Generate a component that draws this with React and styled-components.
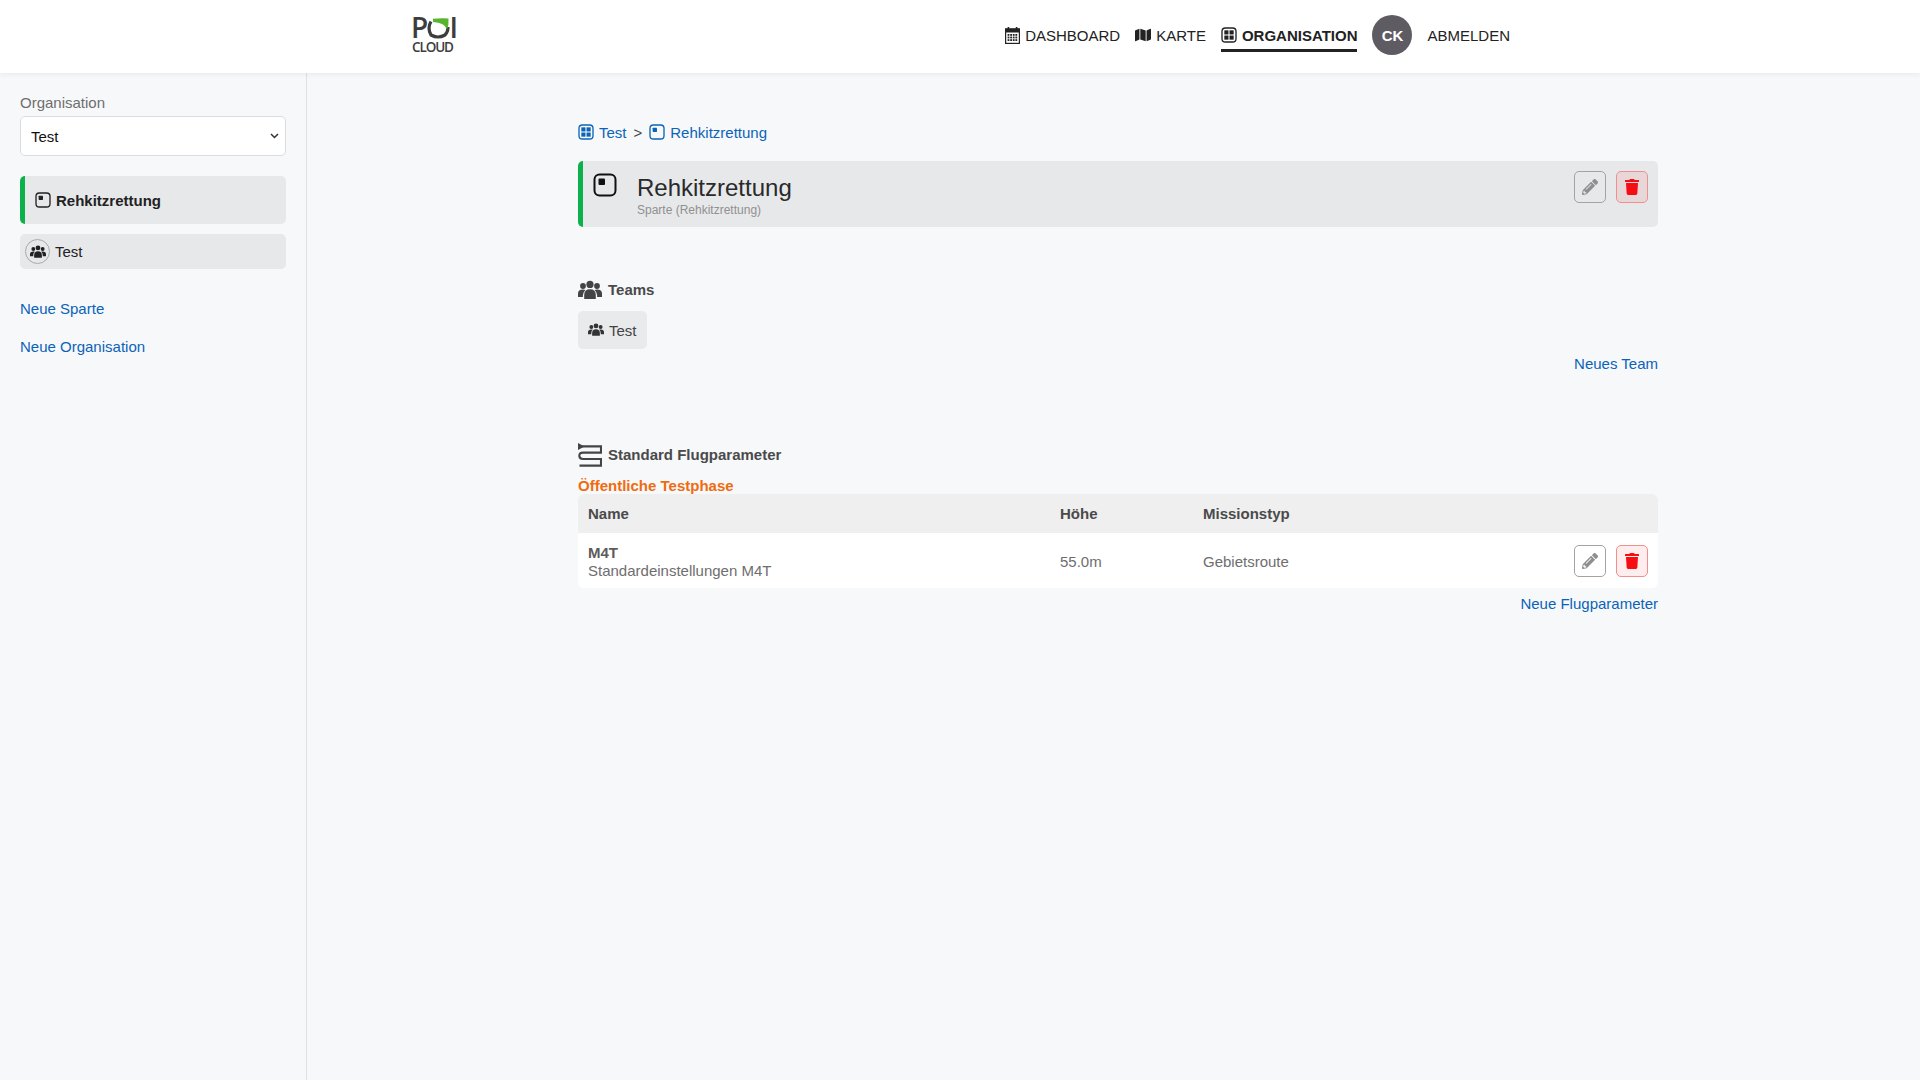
import React from 'react';
import styled, { createGlobalStyle } from 'styled-components';
import { FaMap, FaPencilAlt, FaTrash } from 'react-icons/fa';

const GlobalStyle = createGlobalStyle`
  html, body {
    margin: 0;
    padding: 0;
    background: #f7f8fa;
    color: #222;
    font-family: "Liberation Sans", Arial, sans-serif;
    font-size: 15px;
  }
  * { box-sizing: border-box; }
`;

const Page = styled.div`
  display: flex;
  flex-direction: column;
  min-height: 100vh;
`;

const Header = styled.header`
  display: flex;
  align-items: center;
  justify-content: space-between;
  height: 73px;
  width: 1510px;
  padding: 0 0 3px 412px;
  flex: none;
`;

const HeaderBar = styled.div`
  background: #fff;
  box-shadow: 0 1px 6px rgba(0, 0, 0, 0.07);
  position: relative;
`;

const Nav = styled.nav`
  display: flex;
  align-items: center;
  gap: 15px;
`;

const NavItem = styled.a`
  display: flex;
  align-items: center;
  gap: 5px;
  height: ${({ $active }) => ($active ? '31px' : '34px')};
  margin-top: ${({ $active }) => ($active ? '3px' : '0')};
  border-bottom: ${({ $active }) => ($active ? '3px solid #222' : '0')};
  color: #222;
  font-weight: ${({ $active }) => ($active ? 700 : 400)};
  font-size: 15px;
`;

const Avatar = styled.div`
  display: flex;
  align-items: center;
  justify-content: center;
  width: 40px;
  height: 40px;
  border-radius: 50%;
  background: #5f5b63;
  color: #fff;
  font-weight: 700;
  font-size: 15px;
`;

const Body = styled.div`
  display: flex;
  flex: 1;
`;

const Sidebar = styled.aside`
  width: 307px;
  flex: none;
  padding: 21px 20px 0;
  border-right: 1px solid #dfe1e3;
`;

const FieldLabel = styled.label`
  display: block;
  height: 17px;
  line-height: 17px;
  color: #6e6e6e;
`;

const chevron =
  "data:image/svg+xml,%3Csvg xmlns='http://www.w3.org/2000/svg' width='9' height='6' viewBox='0 0 9 6'%3E%3Cpath d='M1 1l3.5 3.5L8 1' fill='none' stroke='%23333' stroke-width='1.5'/%3E%3C/svg%3E";

const OrgSelect = styled.select`
  display: block;
  width: 266px;
  height: 40px;
  margin-top: 5px;
  padding: 0 20px 0 10px;
  border: 1px solid #dcdcdc;
  border-radius: 5px;
  appearance: none;
  background: #fff url("${chevron}") no-repeat right 6px center;
  color: #111;
  font-family: inherit;
  font-size: 15px;
`;

const SectionItem = styled.div`
  display: flex;
  align-items: center;
  gap: 5px;
  width: 266px;
  height: 48px;
  margin-top: 20px;
  padding-left: 10px;
  border-left: 5px solid #0db14b;
  border-radius: 5px;
  background: #e7e8ea;
  font-weight: 700;
`;

const TeamItem = styled.div`
  display: flex;
  align-items: center;
  gap: 5px;
  width: 266px;
  height: 35px;
  margin-top: 10px;
  padding-left: 5px;
  border-radius: 5px;
  background: #e7e8ea;
`;

const RoundIcon = styled.span`
  display: flex;
  align-items: center;
  justify-content: center;
  width: 25px;
  height: 25px;
  border: 1px solid #aaa;
  border-radius: 50%;
`;

const SideLink = styled.a`
  display: block;
  height: 18px;
  line-height: 18px;
  margin-top: ${({ $top }) => $top}px;
  color: #0b63b8;
`;

const Main = styled.main`
  flex: 1;
  padding: 49px 0 0 271px;
`;

const Content = styled.div`
  width: 1080px;
`;

const Breadcrumb = styled.div`
  display: flex;
  align-items: center;
  height: 20px;
  color: #0b63b8;
`;

const CrumbLink = styled.a`
  display: flex;
  align-items: center;
  gap: 5px;
`;

const CrumbSep = styled.span`
  margin: 0 7px;
  color: #444;
`;

const TitleCard = styled.div`
  display: flex;
  align-items: flex-start;
  height: 66px;
  margin-top: 19px;
  padding: 12px 10px 0;
  border-left: 5px solid #0db14b;
  border-radius: 5px;
  background: #e7e8ea;
`;

const TitleText = styled.div`
  flex: 1;
  margin-left: 20px;
`;

const Title = styled.h1`
  margin: 1px 0 0;
  font-size: 24px;
  font-weight: 400;
  line-height: 28px;
  color: #2a2a2a;
`;

const Subtitle = styled.div`
  margin-top: 1px;
  font-size: 12px;
  line-height: 14px;
  color: #909090;
`;

const Actions = styled.div`
  display: flex;
  justify-content: flex-end;
  gap: 10px;
  margin-top: ${({ $offset }) => $offset || 0}px;
`;

const EditButton = styled.button`
  display: flex;
  align-items: center;
  justify-content: center;
  width: 32px;
  height: 32px;
  padding: 0;
  border: 1px solid #a3a3a3;
  border-radius: 5px;
  background: transparent;
  color: #8f8f8f;
  font-size: 16px;
`;

const DeleteButton = styled(EditButton)`
  border-color: #ef8f8f;
  background: rgba(255, 0, 0, 0.07);
  color: #f60d13;
`;

const SectionHeading = styled.h2`
  display: flex;
  align-items: center;
  gap: 6px;
  height: 24px;
  margin: ${({ $top }) => $top}px 0 0;
  font-size: 15px;
  font-weight: 700;
  color: #4a4a4a;
`;

const HeadingText = styled.span`
  margin-top: -2px;
`;

const TeamChip = styled.div`
  display: inline-flex;
  align-items: center;
  gap: 5px;
  height: 38px;
  margin-top: 9px;
  padding: 0 10px;
  border-radius: 5px;
  background: #e9eaec;
  color: #444;
`;

const RightLink = styled.a`
  display: block;
  height: 18px;
  line-height: 18px;
  margin-top: ${({ $top }) => $top}px;
  text-align: right;
  color: #0b63b8;
`;

const Notice = styled.div`
  height: 17px;
  margin-top: 10px;
  line-height: 17px;
  font-weight: 700;
  color: #ee6c0f;
`;

const ParamTable = styled.table`
  width: 100%;
  border-collapse: separate;
  border-spacing: 0;
  table-layout: fixed;
  border-radius: 6px;
  overflow: hidden;
  background: #fff;
`;

const HeadCell = styled.th`
  height: 39px;
  width: ${({ $width }) => ($width ? `${$width}px` : 'auto')};
  padding: 0 10px;
  background: #efefef;
  text-align: left;
  font-weight: 700;
  color: #4a4a4a;
`;

const Cell = styled.td`
  height: 55px;
  padding: 2px 10px 0;
  color: #6e6e6e;
`;

const ActionCell = styled(Cell)`
  padding-top: 0;
`;

const RowName = styled.div`
  font-weight: 700;
  line-height: 18px;
  color: #5c5c5c;
`;

const RowInfo = styled.div`
  line-height: 18px;
`;

const LayoutIcon = ({ size, stroke, panes }) => (
  <svg width={size} height={size} viewBox="0 0 24 24" fill="none" style={{ flex: 'none' }}>
    <rect x="1.5" y="1.5" width="21" height="21" rx="5" stroke={stroke} strokeWidth="2" />
    {panes ? (
      <>
        <rect x="5" y="5" width="6.2" height="6.2" fill={stroke} />
        <rect x="12.8" y="5" width="6.2" height="6.2" fill={stroke} />
        <rect x="5" y="12.8" width="6.2" height="6.2" fill={stroke} />
        <rect x="12.8" y="12.8" width="6.2" height="6.2" fill={stroke} />
      </>
    ) : (
      <rect x="5.5" y="5.5" width="6.5" height="6.5" rx="1" fill={stroke} />
    )}
  </svg>
);

const UsersIcon = ({ width, color = '#222' }) => (
  <svg width={width} height={(width * 20) / 24} viewBox="0 0 24 20" fill={color} style={{ flex: 'none' }}>
    <circle cx="5" cy="6" r="2.9" />
    <circle cx="19" cy="6" r="2.9" />
    <circle cx="12" cy="4.4" r="3.6" />
    <path d="M6.2 19 V15 Q6.2 9.2 12 9.2 Q17.8 9.2 17.8 15 V19 Z" />
    <path d="M0 17 V13.5 Q0 9.6 5 9.6 Q6.6 9.6 7.4 10.2 Q4.9 11.8 4.9 15.2 V17 Z" />
    <path d="M24 17 V13.5 Q24 9.6 19 9.6 Q17.4 9.6 16.6 10.2 Q19.1 11.8 19.1 15.2 V17 Z" />
  </svg>
);

const CalendarIcon = () => (
  <svg width="15" height="17" viewBox="0 0 15 17" fill="none" style={{ flex: 'none' }}>
    <rect x="0.6" y="2" width="13.8" height="14.4" stroke="#222" strokeWidth="1.2" />
    <rect x="0" y="1.5" width="15" height="4" fill="#222" />
    <rect x="2.6" y="0" width="1.6" height="2" fill="#222" />
    <rect x="10.8" y="0" width="1.6" height="2" fill="#222" />
    {[7, 9.6, 12.2].map((y) =>
      [2.6, 5.2, 7.8, 10.4].map((x) => (
        <rect key={`${x}-${y}`} x={x} y={y} width="1.8" height="1.8" fill="#222" />
      ))
    )}
  </svg>
);

const RouteIcon = () => (
  <svg width="24" height="24" viewBox="0 0 24 24" fill="none" style={{ flex: 'none' }}>
    <path d="M0 0 L6.5 3.4 L0 7 Z" fill="#444" />
    <path
      d="M3 3.4 H23 V9.6 H5 Q1.3 9.6 1.3 12.8 Q1.3 16 5 16 H23 V22.6 H1.5"
      stroke="#444"
      strokeWidth="2.1"
    />
  </svg>
);

const LogoMark = () => (
  <svg width="44" height="35" viewBox="0 0 44 35" fill="#3d3d3d" style={{ flex: 'none', overflow: 'visible' }}>
    <text x="-1" y="20" fontFamily="'Open Sans', sans-serif" fontSize="28" fontWeight="600">P</text>
    <text x="37.5" y="20" fontFamily="'Open Sans', sans-serif" fontSize="28" fontWeight="600">I</text>
    <g fill="none" transform="translate(16 0)">
      <path d="M3 3.5 Q-1 10 3 17 Q10 21 17 17 Q20 14 20 9" stroke="#3d3d3d" strokeWidth="3.2" />
      <path d="M5 0.8 Q13 0 20.5 0.5 Q21 7 19 11.5 Q17 4.5 5 4 Z" fill="#56b52c" />
    </g>
    <text x="0" y="34" fontFamily="'Open Sans', sans-serif" fontSize="13.5" fontWeight="600" textLength="42">CLOUD</text>
  </svg>
);

const App = () => (
  <Page>
    <GlobalStyle />
    <HeaderBar>
      <Header>
        <LogoMark />
        <Nav>
          <NavItem>
            <CalendarIcon />
            DASHBOARD
          </NavItem>
          <NavItem>
            <FaMap size={16} />
            KARTE
          </NavItem>
          <NavItem $active>
            <LayoutIcon size={16} stroke="#222" panes />
            ORGANISATION
          </NavItem>
          <Avatar>CK</Avatar>
          <NavItem>ABMELDEN</NavItem>
        </Nav>
      </Header>
    </HeaderBar>
    <Body>
      <Sidebar>
        <FieldLabel>Organisation</FieldLabel>
        <OrgSelect defaultValue="Test">
          <option>Test</option>
        </OrgSelect>
        <SectionItem>
          <LayoutIcon size={16} stroke="#222" />
          Rehkitzrettung
        </SectionItem>
        <TeamItem>
          <RoundIcon>
            <UsersIcon width={16} />
          </RoundIcon>
          Test
        </TeamItem>
        <SideLink $top={31}>Neue Sparte</SideLink>
        <SideLink $top={20}>Neue Organisation</SideLink>
      </Sidebar>
      <Main>
        <Content>
          <Breadcrumb>
            <CrumbLink>
              <LayoutIcon size={16} stroke="#0b63b8" panes />
              Test
            </CrumbLink>
            <CrumbSep>&gt;</CrumbSep>
            <CrumbLink>
              <LayoutIcon size={16} stroke="#0b63b8" />
              Rehkitzrettung
            </CrumbLink>
          </Breadcrumb>
          <TitleCard>
            <LayoutIcon size={24} stroke="#111" />
            <TitleText>
              <Title>Rehkitzrettung</Title>
              <Subtitle>Sparte (Rehkitzrettung)</Subtitle>
            </TitleText>
            <Actions $offset={-2}>
              <EditButton>
                <FaPencilAlt />
              </EditButton>
              <DeleteButton>
                <FaTrash />
              </DeleteButton>
            </Actions>
          </TitleCard>
          <SectionHeading $top={51}>
            <UsersIcon width={24} color="#444" />
            <HeadingText>Teams</HeadingText>
          </SectionHeading>
          <TeamChip>
            <UsersIcon width={16} color="#333" />
            Test
          </TeamChip>
          <RightLink $top={6}>Neues Team</RightLink>
          <SectionHeading $top={70}>
            <RouteIcon />
            <HeadingText>Standard Flugparameter</HeadingText>
          </SectionHeading>
          <Notice>Öffentliche Testphase</Notice>
          <ParamTable>
            <thead>
              <tr>
                <HeadCell $width={472}>Name</HeadCell>
                <HeadCell $width={143}>Höhe</HeadCell>
                <HeadCell>Missionstyp</HeadCell>
                <HeadCell $width={110} />
              </tr>
            </thead>
            <tbody>
              <tr>
                <Cell>
                  <RowName>M4T</RowName>
                  <RowInfo>Standardeinstellungen M4T</RowInfo>
                </Cell>
                <Cell>55.0m</Cell>
                <Cell>Gebietsroute</Cell>
                <ActionCell>
                  <Actions>
                    <EditButton>
                      <FaPencilAlt />
                    </EditButton>
                    <DeleteButton>
                      <FaTrash />
                    </DeleteButton>
                  </Actions>
                </ActionCell>
              </tr>
            </tbody>
          </ParamTable>
          <RightLink $top={7}>Neue Flugparameter</RightLink>
        </Content>
      </Main>
    </Body>
  </Page>
);

export default App;
